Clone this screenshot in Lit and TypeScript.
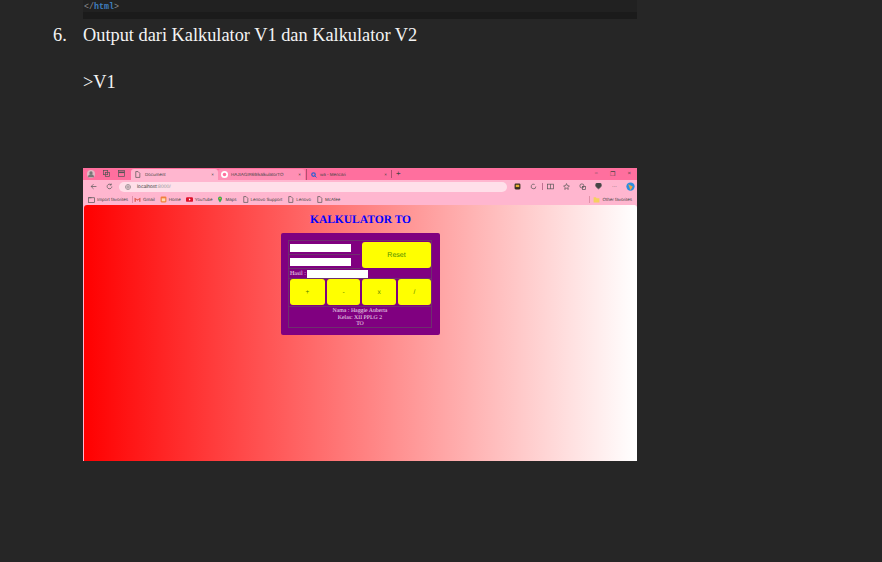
import {css, html, LitElement, svg} from 'lit';
import {customElement} from 'lit/decorators.js';

const icon = (body: unknown, size = 7, stroke = '#555') => html`
  <svg width=${size} height=${size} viewBox="0 0 12 12" fill="none" stroke=${stroke} stroke-width="1.2">${body}</svg>`;

const pageIcon = svg`<path d="M3 1h4l3 3v7H3z"/>`;

const bookmarks: [string, unknown][] = [
  ['Gmail', html`<svg width="7" height="7" viewBox="0 0 12 12"><path d="M1 3v7h2V5l3 3 3-3v5h2V3L6 6z" fill="#d8503f"/></svg>`],
  ['Home', html`<svg width="7" height="7" viewBox="0 0 12 12"><rect x="1" y="1" width="10" height="10" rx="2" fill="#f0803c"/><rect x="3" y="4" width="6" height="5" fill="#ffd9b0"/></svg>`],
  ['YouTube', html`<svg width="7" height="7" viewBox="0 0 12 12"><rect x="0" y="2" width="12" height="8" rx="2" fill="#e0112b"/><path d="M5 4l3 2-3 2z" fill="#fff"/></svg>`],
  ['Maps', html`<svg width="6" height="7" viewBox="0 0 12 12"><path d="M6 0a4 4 0 0 1 4 4c0 3-4 8-4 8S2 7 2 4a4 4 0 0 1 4-4z" fill="#3aa757"/><circle cx="6" cy="4" r="1.6" fill="#fbbc04"/></svg>`],
  ['Lenovo Support', icon(pageIcon)],
  ['Lenovo', icon(pageIcon)],
  ['McAfee', icon(pageIcon)],
];

@customElement('app-root')
export class AppRoot extends LitElement {
  static override styles = css`
    :host {
      display: block;
      width: 882px;
      height: 562px;
      overflow: hidden;
      background: #262626;
      color: #f4f4f4;
      font-family: 'Liberation Serif', serif;
      font-size: 18.34px;
    }
    .code {
      margin-left: 83px;
      width: 554px;
      background: #212121;
    }
    .code-line {
      height: 11px;
      padding: 1px 0 0 1px;
      font: 8.3px/12px 'Liberation Mono', monospace;
      color: #8a8a8a;
    }
    .code-line b { color: #3f7fc0; }
    .code-scroll { height: 7px; background: #1b1b1b; }
    .item {
      display: flex;
      margin-top: 5px;
      height: 22px;
      line-height: 22px;
    }
    .num { width: 83px; padding-left: 53px; box-sizing: border-box; }
    .v1 { margin: 25px 0 0 83px; height: 22px; line-height: 22px; }
    .shot {
      margin: 75px 0 0 83px;
      width: 554px;
      height: 293px;
      display: flex;
      flex-direction: column;
      background: #ffb6cf;
      font-family: 'Liberation Sans', sans-serif;
      color: #444;
      text-rendering: geometricPrecision;
    }
    .tabs {
      height: 12px;
      display: flex;
      align-items: center;
      background: #ff6f9e;
      font-size: 4.5px;
    }
    .tab-icons { display: flex; gap: 8px; padding-left: 4px; width: 48px; box-sizing: border-box; }
    .tab {
      width: 87px;
      height: 11px;
      margin-top: 1px;
      display: flex;
      align-items: center;
      gap: 4px;
      padding: 0 4px 0 3px;
      box-sizing: border-box;
    }
    .tab span { flex: 1; }
    .tab.active { background: #ffb6cf; border-radius: 3px 3px 0 0; }
    .tab.mid { background: #ff8fb4; border-radius: 3px 3px 0 0; gap: 3px; }
    .tab.last { border-left: 1px solid #b05070; margin-left: 1px; width: 85px; padding-left: 4px; gap: 3px; }
    .plus { border-left: 1px solid #b05070; padding-left: 4px; font-size: 8px; line-height: 8px; }
    .win { margin-left: auto; display: flex; gap: 12px; padding-right: 6px; font-size: 6px; }
    .toolbar {
      height: 13px;
      display: flex;
      align-items: center;
      background: #ffb6cf;
      font-size: 5px;
      padding-left: 7px;
    }
    .nav { display: flex; gap: 9px; width: 29px; flex: none; }
    .url {
      width: 388px;
      height: 10px;
      flex: none;
      border-radius: 5px;
      background: #ffdfe9;
      display: flex;
      align-items: center;
      gap: 6px;
      padding-left: 6px;
      box-sizing: border-box;
    }
    .url i { color: #999; font-style: normal; }
    .tools { display: flex; align-items: center; gap: 9px; margin-left: 7px; }
    .tools .sep { width: 1px; height: 7px; margin: 0 -5px 0 -4px; background: #c07090; }
    .tools .dots { width: 7px; text-align: center; }
    .tools .copilot { margin-left: -1px; }
    .bookmarks {
      height: 12px;
      display: flex;
      align-items: center;
      gap: 5px;
      padding: 0 5px;
      font-size: 4.5px;
      background: #ffb6cf;
    }
    .bookmarks div { display: flex; align-items: center; gap: 2px; }
    .bookmarks .sep { width: 1px; height: 7px; background: #e090a8; margin: 0 -4px 0 -1px; }
    .bookmarks .other { margin: 0 -2px 0 auto; }
    .page {
      flex: 1;
      display: flex;
      flex-direction: column;
      align-items: center;
      margin-left: 1px;
      border-radius: 3px 3px 0 0;
      background: linear-gradient(to right, #ff0000, #ffffff);
      font-family: 'Liberation Serif', serif;
    }
    h1 {
      margin: 8px 0 0;
      height: 15px;
      font-size: 11.5px;
      line-height: 15px;
      color: #0000ff;
    }
    .calc {
      margin-top: 5px;
      width: 159px;
      height: 102px;
      padding: 7px 8px 7px 7px;
      box-sizing: border-box;
      border-radius: 2px;
      background: #800080;
      color: #f0e0f0;
    }
    .frame {
      border: 1px solid #6e306e;
      height: 100%;
      box-sizing: border-box;
      display: grid;
      grid-template-columns: 71px 1fr;
      grid-template-rows: 14px 14px 10px 27px 1fr;
      font-size: 5.8px;
    }
    .cell {
      display: flex;
      align-items: center;
      padding-left: 1px;
      border-bottom: 1px solid #6e306e;
      box-sizing: border-box;
    }
    .input { width: 61px; height: 8px; background: #fff; border: 0; flex: none; }
    .reset {
      grid-column: 2;
      grid-row: 1 / 3;
      margin: 1px 0 1px 2px;
      border-radius: 3px;
      background: #ffff00;
      color: #4f9000;
      font: 7px 'Liberation Sans', sans-serif;
      display: flex;
      align-items: center;
      justify-content: center;
    }
    .hasil { grid-column: 1 / 3; gap: 1px; font-size: 6px; }
    .ops {
      grid-column: 1 / 3;
      display: grid;
      grid-template-columns: 35px 33px 34px 33px;
      gap: 2px;
      padding-left: 1px;
    }
    .ops div {
      height: 26px;
      border-radius: 3px;
      background: #ffff00;
      color: #4f8000;
      font: 6.5px 'Liberation Sans', sans-serif;
      display: flex;
      align-items: center;
      justify-content: center;
    }
    .info {
      grid-column: 1 / 3;
      text-align: center;
      line-height: 6.5px;
      padding-top: 1px;
      border-top: 1px solid #6e306e;
    }
  `;

  override render() {
    return html`
      <div class="code">
        <div class="code-line">&lt;/<b>html</b>&gt;</div>
        <div class="code-scroll"></div>
      </div>
      <div class="item">
        <div class="num">6.</div>
        <div>Output dari Kalkulator V1 dan Kalkulator V2</div>
      </div>
      <div class="v1">&gt;V1</div>
      <div class="shot">
        <div class="tabs">
          <div class="tab-icons">
            <svg width="8" height="8" viewBox="0 0 12 12"><circle cx="6" cy="6" r="6" fill="#e0b8c4"/><circle cx="6" cy="4.5" r="2.5" fill="#777"/><path d="M1.5 11a4.5 4.5 0 0 1 9 0" fill="#777"/></svg>
            ${icon(svg`<rect x="1" y="1" width="7" height="7"/><rect x="4" y="4" width="7" height="7"/>`)}
            ${icon(svg`<rect x="1" y="1" width="10" height="10"/><path d="M1 4h10" stroke-width="2.5"/>`)}
          </div>
          <div class="tab active">${icon(pageIcon)}<span>Document</span>×</div>
          <div class="tab mid">
            <svg width="7" height="7" viewBox="0 0 12 12"><circle cx="6" cy="6" r="6" fill="#fff"/><circle cx="6" cy="6" r="3" fill="#ff6f9e"/></svg>
            <span>HAJIAGIR69/kalkulatorTO</span>×
          </div>
          <div class="tab last">
            <svg width="6" height="6" viewBox="0 0 12 12"><circle cx="5" cy="5" r="3.5" fill="none" stroke="#3060d0" stroke-width="2.5"/><path d="M8 8l3 3" stroke="#3060d0" stroke-width="2"/></svg>
            <span>wa - Mencari</span>×
          </div>
          <div class="plus">+</div>
          <div class="win"><span>−</span><span>❐</span><span>×</span></div>
        </div>
        <div class="toolbar">
          <div class="nav">
            ${icon(svg`<path d="M11 6H2M6 2L2 6l4 4"/>`)}
            ${icon(svg`<path d="M10 6a4 4 0 1 1-1.5-3.2M9 1v2.5H6.5"/>`)}
          </div>
          <div class="url">
            ${icon(svg`<circle cx="6" cy="6" r="5"/><path d="M1 6h10M6 1v10"/>`, 6, '#777')}
            <span>localhost<i>:8000/</i></span>
          </div>
          <div class="tools">
            <svg width="7" height="7" viewBox="0 0 12 12"><rect x="1" y="1" width="10" height="10" rx="2" fill="#3a3020"/><rect x="3" y="3" width="6" height="4" fill="#e8b030"/></svg>
            ${icon(svg`<path d="M10 6a4 4 0 1 1-2-3.5"/>`)}
            <span class="sep"></span>
            ${icon(svg`<rect x="1" y="2" width="10" height="8"/><path d="M6 2v8"/>`)}
            ${icon(svg`<path d="M6 1l1.5 3.5L11 5 8.5 7.5 9 11 6 9l-3 2 .5-3.5L1 5l3.5-.5z"/>`)}
            ${icon(svg`<circle cx="5" cy="5" r="3.5"/><rect x="6" y="6" width="5" height="5"/>`)}
            ${icon(svg`<path d="M1 4a5 5 0 0 1 10 0c0 3-5 6-5 6S1 7 1 4z" fill="#444"/>`)}
            <span class="dots">···</span>
            <svg class="copilot" width="9" height="9" viewBox="0 0 12 12"><circle cx="6" cy="6" r="5.5" fill="#2a8fe0"/><path d="M3 3l6 3-3 5z" fill="#f0a040"/></svg>
          </div>
        </div>
        <div class="bookmarks">
          <div>${icon(svg`<rect x="1" y="3" width="10" height="8"/><path d="M1 3h5"/>`)}Import favorites</div>
          <span class="sep"></span>
          ${bookmarks.map(([label, glyph]) => html`<div>${glyph}${label}</div>`)}
          <span class="sep other"></span>
          <div>
            <svg width="7" height="7" viewBox="0 0 12 12"><path d="M1 2h4l1 2h5v7H1z" fill="#f5d060"/></svg>
            Other favorites
          </div>
        </div>
        <div class="page">
          <h1>KALKULATOR TO</h1>
          <div class="calc">
            <div class="frame">
              <div class="cell"><div class="input"></div></div>
              <div class="reset">Reset</div>
              <div class="cell"><div class="input"></div></div>
              <div class="cell hasil">Hasil : <div class="input"></div></div>
              <div class="ops"><div>+</div><div>-</div><div>x</div><div>/</div></div>
              <div class="info">Nama : Haggie Auberta<br />Kelas: XII PPLG 2<br />TO</div>
            </div>
          </div>
        </div>
      </div>
    `;
  }
}

declare global {
  interface HTMLElementTagNameMap {
    'app-root': AppRoot;
  }
}
